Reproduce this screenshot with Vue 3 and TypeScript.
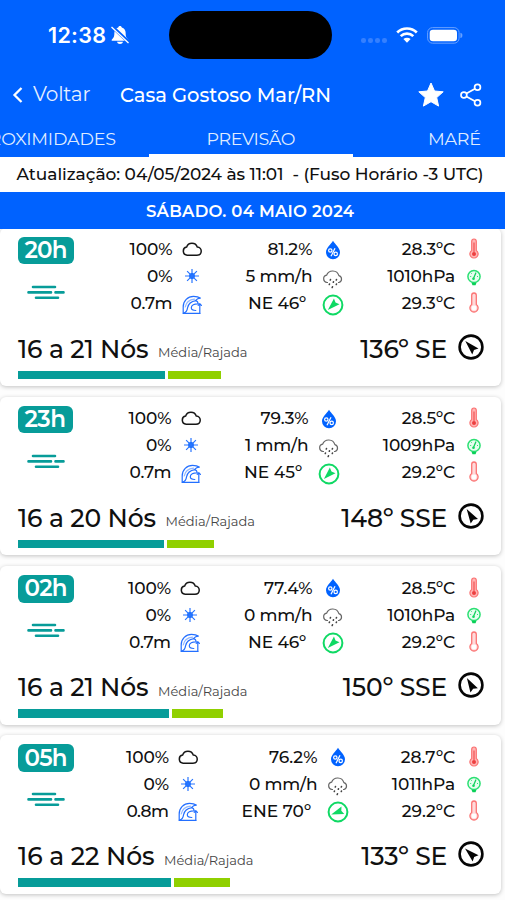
<script setup lang="ts">
type Reading = [label: string, width: number]

interface Slot {
  hour: string
  badge: number
  firstEnd: number
  secondEnd: number
  cloud: Reading
  sun: Reading
  wave: Reading
  humidity: Reading
  rain: Reading
  waveDir: Reading
  waveAngle: number
  air: Reading
  pressure: Reading
  water: Reading
  wind: Reading
  windDir: Reading
  windAngle: number
  mean: number
  gust: number
}

const slots: Slot[] = [
  {
    hour: '20h', badge: 56, firstEnd: 183.5, secondEnd: 325.5,
    cloud: ['100%', 43], sun: ['0%', 25.5], wave: ['0.7m', 42],
    humidity: ['81.2%', 45], rain: ['5 mm/h', 67], waveDir: ['NE 46º', 58], waveAngle: 226,
    air: ['28.3ºC', 53.5], pressure: ['1010hPa', 68], water: ['29.3ºC', 53.5],
    wind: ['16 a 21 Nós', 130.5], windDir: ['136º SE', 87], windAngle: 316, mean: 146.5, gust: 53.5,
  },
  {
    hour: '23h', badge: 54.5, firstEnd: 182.5, secondEnd: 321.5,
    cloud: ['100%', 43], sun: ['0%', 25.5], wave: ['0.7m', 42],
    humidity: ['79.3%', 48], rain: ['1 mm/h', 63.5], waveDir: ['NE 45º', 58], waveAngle: 225,
    air: ['28.5ºC', 53.5], pressure: ['1009hPa', 72.5], water: ['29.2ºC', 53.5],
    wind: ['16 a 20 Nós', 138], windDir: ['148º SSE', 106], windAngle: 328, mean: 146, gust: 46.5,
  },
  {
    hour: '02h', badge: 56, firstEnd: 182, secondEnd: 325.5,
    cloud: ['100%', 43], sun: ['0%', 25.5], wave: ['0.7m', 42],
    humidity: ['77.4%', 48.5], rain: ['0 mm/h', 68.5], waveDir: ['NE 46º', 58], waveAngle: 226,
    air: ['28.5ºC', 53.5], pressure: ['1010hPa', 68], water: ['29.2ºC', 53.5],
    wind: ['16 a 21 Nós', 130.5], windDir: ['150º SSE', 104.5], windAngle: 330, mean: 150.5, gust: 51,
  },
  {
    hour: '05h', badge: 56, firstEnd: 180, secondEnd: 330.5,
    cloud: ['100%', 43], sun: ['0%', 25.5], wave: ['0.8m', 42.5],
    humidity: ['76.2%', 48.5], rain: ['0 mm/h', 68.5], waveDir: ['ENE 70º', 69.5], waveAngle: 250,
    air: ['28.7ºC', 54.5], pressure: ['1011hPa', 63.5], water: ['29.2ºC', 53.5],
    wind: ['16 a 22 Nós', 136.5], windDir: ['133º SE', 86], windAngle: 313, mean: 153, gust: 56,
  },
]

const columns = (s: Slot) => ({
  gridTemplateColumns: `${s.firstEnd}px ${s.secondEnd - s.firstEnd}px 1fr`,
})

// Tracks a label so that it fills the given advance width.
const vFit = {
  mounted(el: HTMLElement, binding: { value: number }) {
    const count = (el.textContent ?? '').length
    const spacing = (binding.value - el.getBoundingClientRect().width) / (count - 1)
    el.style.letterSpacing = `${spacing}px`
    el.style.marginRight = `${-spacing}px`
  },
}
</script>

<template>
  <div class="screen">
    <header class="top">
      <div class="status">
        <span v-fit="58" class="clock">12:38</span>
        <svg class="bell" viewBox="0 0 20 20">
          <path d="M10 1c1.1 0 1.6.7 1.8 1.4 2.5.8 3.8 2.8 3.8 5.2 0 3.900 .7 5.400 2.700 7.200v.9H1.700v-.9c2-1.800 2.700-3.300 2.700-7.200 0-2.400 1.300-4.400 3.800-5.200C8.400 1.700 8.900 1 10 1z" fill="#fff" />
          <path d="M7 16.800h6c-.4 1.500-1.500 2.200-3 2.200s-2.600-.7-3-2.200z" fill="#fff" />
          <path d="M2 1.500L19 17.500" stroke="#0062ff" stroke-width="3.400" />
          <path d="M1.500 2L18.500 18" stroke="#fff" stroke-width="1.300" />
        </svg>
        <div class="island"></div>
        <div class="dots"><i v-for="n in 4" :key="n"></i></div>
        <svg class="wifi" viewBox="0 0 22 16">
          <g fill="none" stroke="#fff" stroke-width="2.700">
            <path d="M1.200 5.500a14 14 0 0 1 19.600 0" />
            <path d="M4.700 9.100a9 9 0 0 1 12.600 0" />
          </g>
          <path d="M11 15.800L7.400 12.100a5.200 5.200 0 0 1 7.200 0z" fill="#fff" />
        </svg>
        <svg class="battery" viewBox="0 0 36 17">
          <rect x=".6" y=".6" width="31.500" height="15.600" rx="5" fill="none" stroke="#67a0ff" stroke-width="1" />
          <rect x="2.700" y="2.700" width="27.300" height="11.500" rx="3.300" fill="#fff" />
          <path d="M33.400 5.700c1.600.5 2 1.500 2 2.700s-.4 2.200-2 2.700z" fill="#67a0ff" />
        </svg>
      </div>
      <nav class="bar">
        <svg class="back" viewBox="0 0 12 18"><path d="M9.500 2L2.500 9l7 7" fill="none" stroke="#fff" stroke-width="2.300" /></svg>
        <span v-fit="57.5" class="back-label">Voltar</span>
        <h1 v-fit="211">Casa Gostoso Mar/RN</h1>
        <svg class="star" viewBox="0 0 26 26"><path d="M13 1l3.500 8 8.700.8-6.500 5.800 1.900 8.500L13 19.700l-7.600 4.400 1.900-8.500L.8 9.800 9.500 9z" fill="#fff" stroke="#fff" stroke-width="1" stroke-linejoin="round" /></svg>
        <svg class="share" viewBox="0 0 22 24">
          <g fill="none" stroke="#fff" stroke-width="1.700">
            <circle cx="3.900" cy="12" r="2.900" /><circle cx="17.500" cy="4.300" r="2.900" /><circle cx="17.500" cy="19.700" r="2.900" />
            <path d="M6.400 10.500L15 5.700M6.400 13.500L15 18.300" />
          </g>
        </svg>
      </nav>
      <div class="tabs">
        <div class="tab prev"><span v-fit="139.5">PROXIMIDADES</span></div>
        <div class="tab active"><span v-fit="89">PREVISÃO</span></div>
        <div class="tab next"><span v-fit="53">MARÉ</span></div>
      </div>
    </header>

    <p class="updated"><span v-fit="467">Atualização: 04/05/2024 às 11:01&nbsp; - (Fuso Horário -3 UTC)</span></p>
    <h2 class="day"><span v-fit="208">SÁBADO. 04 MAIO 2024</span></h2>

    <main class="list">
      <article v-for="s in slots" :key="s.hour" class="card">
        <div class="readings" :style="columns(s)">
          <div class="first">
            <div class="time">
              <b class="badge" :style="{ width: s.badge + 'px' }"><span v-fit="s.badge - 13">{{ s.hour }}</span></b>
              <svg class="haze" viewBox="0 0 38 15">
                <path d="M6 2h22M1.500 7.400h22.500M28.500 7.400h8M9 12.700h22" stroke="#079c99" stroke-width="2.600" stroke-linecap="round" />
              </svg>
            </div>
            <div class="col">
              <div class="cell">
                <span v-fit="s.cloud[1]">{{ s.cloud[0] }}</span>
                <svg class="ic" viewBox="0 0 20 20"><path d="M5.100 16.200a4.100 4.100 0 0 1-.5-8.100 5.600 5.600 0 0 1 10.700 0c5.300 0 5.300 8.100-.4 8.100z" fill="none" stroke="#161616" stroke-width="1.500" /></svg>
              </div>
              <div class="cell">
                <span v-fit="s.sun[1]">{{ s.sun[0] }}</span>
                <svg class="ic" viewBox="0 0 20 20">
                  <circle cx="10" cy="10" r="2.900" fill="#0062ff" />
                  <path d="M10 3v14M3 10h14M5.100 5.100l9.800 9.800M14.900 5.100l-9.800 9.800" stroke="#2875ff" stroke-width="1.200" />
                </svg>
              </div>
              <div class="cell">
                <span v-fit="s.wave[1]">{{ s.wave[0] }}</span>
                <svg class="ic wave" viewBox="0 0 20 20">
                  <g fill="none" stroke="#236fff" stroke-width="1.200" stroke-linejoin="round" stroke-linecap="round">
                    <path d="M1.200 18.300V12C1.200 6 5.800 1.400 11.500 1.400c2.700 0 5 .4 6.800 1.700-2 .1-3.600 1-4.600 2.300" />
                    <path d="M1.200 18.300H18" />
                    <path d="M3.200 12C4 8 7.500 4.700 12.500 4.200" opacity=".5" />
                    <path d="M1.600 18c3.300-.6 3.600-3 3.900-5C6.200 9 9.500 6.200 14 5.600c1.500.5 2 1.600 2.300 3.200-4-.2-7 1.400-7 4 0 1.800 1.600 2.700 4.500 2.700" />
                    <path d="M17.800 18.300V9M16.200 10.300l1.600-1.600 1.600 1.600" />
                  </g>
                </svg>
              </div>
            </div>
          </div>

          <div class="col second">
            <div class="cell">
              <span v-fit="s.humidity[1]">{{ s.humidity[0] }}</span>
              <svg class="ic drop" viewBox="0 0 22 22">
                <path d="M11 1.800c2.300 3.900 7 7.200 7 11.400a7 7 0 0 1-14 0c0-4.200 4.700-7.500 7-11.400z" fill="#0062ff" />
                <g fill="none" stroke="#fff" stroke-width="1.200"><circle cx="8.300" cy="11.500" r="1.700" /><circle cx="13.700" cy="14.900" r="1.700" /><path d="M13 9.200L9 17.300" /></g>
              </svg>
            </div>
            <div class="cell">
              <span v-fit="s.rain[1]">{{ s.rain[0] }}</span>
              <svg class="ic rain" viewBox="0 0 22 22">
                <path d="M6 14.500H5a3.700 3.700 0 0 1-.4-7.300 6.500 6.500 0 0 1 12.300.4A3.600 3.600 0 0 1 17 14.500h-1" fill="none" stroke="#666" stroke-width="1.200" />
                <path d="M8.500 11.500l-.2.500M14.500 11.500l-.2.500M11.500 13.700l-.2.600M7.500 16l-.2.500M14.500 16l-.2.500M10.500 18.800l-.3.700" stroke="#444" stroke-width="1.600" stroke-linecap="round" />
              </svg>
            </div>
            <div class="cell heading">
              <span v-fit="s.waveDir[1]">{{ s.waveDir[0] }}</span>
              <svg class="ic" viewBox="0 0 22 22">
                <circle cx="11" cy="11" r="9.400" fill="none" stroke="#0fd964" stroke-width="2" />
                <path d="M11 3.800l4 12.400-4-1.700-4 1.700z" fill="#0fd964" :transform="`rotate(${s.waveAngle} 11 11)`" />
              </svg>
            </div>
          </div>

          <div class="col third">
            <div class="cell">
              <span v-fit="s.air[1]">{{ s.air[0] }}</span>
              <svg class="ic" viewBox="0 0 20 22">
                <path d="M7.700 12.500V3.300a2.300 2.300 0 0 1 4.600 0v9.200a4.100 4.100 0 1 1-4.600 0z" fill="#ffb5b5" stroke="#fb7272" stroke-width="1.200" />
                <circle cx="10" cy="16" r="2" fill="#ed3f3f" /><path d="M10 4.500v10" stroke="#f15050" stroke-width="1.200" />
              </svg>
            </div>
            <div class="cell">
              <span v-fit="s.pressure[1]">{{ s.pressure[0] }}</span>
              <svg class="ic gauge" viewBox="0 0 20 22">
                <circle cx="10" cy="9.500" r="6.100" fill="#e6fdef" stroke="#2be073" stroke-width="1.500" />
                <path d="M7.500 15.700h5l-1 2.600h-3z" fill="#0ad058" />
                <path d="M6.200 9.500h1M7.300 6.300l.7.700M13 9.500h1" stroke="#2be073" stroke-width="1" />
                <path d="M9.500 11.500L11.800 6" stroke="#17cf60" stroke-width="1.300" stroke-linecap="round" /><circle cx="9.500" cy="11.800" r="1.300" fill="#0fd860" />
              </svg>
            </div>
            <div class="cell">
              <span v-fit="s.water[1]">{{ s.water[0] }}</span>
              <svg class="ic" viewBox="0 0 20 22">
                <path d="M7.700 12.500V3.300a2.300 2.300 0 0 1 4.600 0v9.200a4.100 4.100 0 1 1-4.600 0z" fill="#ffdada" stroke="#fb7474" stroke-width="1.300" />
                <circle cx="10" cy="16" r="2.400" fill="#fff" />
              </svg>
            </div>
          </div>
        </div>

        <div class="wind">
          <span v-fit="s.wind[1]" class="speed">{{ s.wind[0] }}</span>
          <small v-fit="89.5">Média/Rajada</small>
          <span v-fit="s.windDir[1]" class="speed direction">{{ s.windDir[0] }}</span>
          <svg class="compass" viewBox="0 0 26 26">
            <circle cx="13" cy="13" r="11.400" fill="none" stroke="#050505" stroke-width="2.600" />
            <path d="M13 4.800l4.300 14.500-4.300-2-4.300 2z" fill="#050505" :transform="`rotate(${s.windAngle} 13 13)`" />
          </svg>
        </div>
        <div class="scale">
          <i class="mean" :style="{ width: s.mean + 'px' }"></i>
          <i class="gust" :style="{ width: s.gust + 'px' }"></i>
        </div>
      </article>
    </main>
  </div>
</template>

<style>
body { background: #fff; }
</style>

<style scoped>
.screen {
  width: 505px;
  height: 900px;
  overflow: hidden;
  background: #fdfdfd;
  font-family: Montserrat, Inter, "Liberation Sans", sans-serif;
  color: #101010;
  white-space: nowrap;
}
svg { display: block; flex: none; }
span, small, h1 { flex: none; }
.top { background: #0062ff; color: #fff; height: 157px; }
.status { display: flex; align-items: center; height: 70px; padding-left: 48px; }
.clock { font-family: Inter, sans-serif; font-size: 21.5px; font-weight: 600; }
.bell { width: 20px; height: 20px; margin-left: 4px; }
.island { width: 163px; height: 48px; border-radius: 24px; background: #000; margin-left: 39px; }
.dots { display: flex; gap: 2.500px; margin: 11px 0 0 29px; }
.dots i { width: 4.500px; height: 4.500px; border-radius: 50%; background: #3580ff; }
.wifi { width: 22px; height: 16px; margin-left: 9px; }
.battery { width: 36px; height: 17px; margin-left: 9px; }
.bar { display: flex; align-items: center; height: 50px; padding-left: 12px; }
.back { width: 12px; height: 18px; }
.back-label { margin: -3px 0 0 9px; font-size: 20px; font-weight: 400; opacity: .9; }
h1 { margin: 0 0 0 29.500px; font-size: 19.500px; font-weight: 500; }
.star { width: 26px; height: 26px; margin-left: auto; }
.share { width: 22px; height: 24px; margin: 0 23px 0 16.500px; }
.tabs { display: grid; grid-template-columns: 149px 204px 1fr; height: 37px; }
.tab { display: flex; align-items: center; height: 37px; box-sizing: border-box; padding-bottom: 1px; font-size: 17.500px; font-weight: 400; color: #dfebff; overflow: hidden; }
.prev { justify-content: flex-end; padding-right: 33px; }
.active { justify-content: center; border-bottom: 3px solid #fff; padding: 2px 0 0; }
.next { padding-left: 75px; }
.updated { display: flex; justify-content: center; align-items: center; margin: 0; height: 35px; font-size: 17px; font-weight: 500; background: #fff; padding: 0 5px 1px 0; box-sizing: border-box; }
.day { position: relative; display: flex; justify-content: center; align-items: center; margin: 0; height: 37px; background: #0062ff; color: #fff; font-size: 16.500px; font-weight: 600; padding-right: 5px; padding-top: 1px; box-sizing: border-box; }
.list { display: grid; gap: 10.750px; margin-top: -1.500px; }
.card { box-sizing: border-box; width: 501px; height: 158.500px; padding: 9px 16.800px 0 18px; border-radius: 6px; background: #fff; box-shadow: 0 1px 4px rgba(0, 0, 0, .24); }
.readings { display: grid; height: 90px; }
.first { display: flex; justify-content: space-between; }
.badge { display: flex; align-items: center; justify-content: center; height: 27.500px; border-radius: 6px; background: #079c99; color: #fff; font-size: 23px; font-weight: 600; line-height: 1; }
.haze { width: 38px; height: 15px; margin: 20.500px 0 0 8.500px; }
.col { display: grid; grid-template-rows: repeat(3, 27px); justify-items: end; margin-top: -.800px; }
.cell { display: flex; align-items: center; gap: 9px; height: 27px; font-size: 17px; font-weight: 500; }
.ic { width: 20px; height: 20px; }
.wave { margin-top: 3px; }
.second .ic { width: 22px; height: 22px; }
.second .drop { margin-top: 1px; }
.second .rain { margin-top: 5px; }
.second .heading .ic { margin-top: 3px; }
.second .heading { gap: 15.500px; }
.third .ic { height: 22px; }
.third .gauge { margin-top: 3px; }
.wind { display: flex; align-items: center; height: 44px; }
.speed { font-size: 25px; font-weight: 500; line-height: 44px; }
small { margin: 7px 0 0 9.500px; font-size: 13px; color: #454545; }
.direction { margin-left: auto; }
.compass { width: 26px; height: 26px; margin: -4px 0 0 11px; }
.scale { display: flex; gap: 3px; }
.scale i { height: 8.500px; }
.mean { background: #079c99; }
.gust { background: #90d000; }
</style>
